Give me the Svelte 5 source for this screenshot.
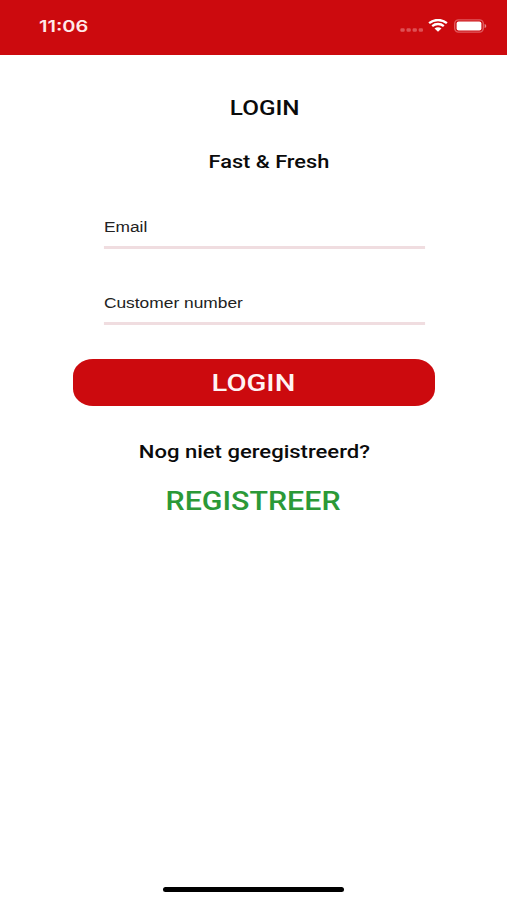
<script>
  let email = $state('');
  let customerNumber = $state('');
</script>

<div class="screen">
  <header class="status-bar">
    <span class="wide time">11:06</span>
    <div class="status-icons">
      <svg class="signal" width="24" height="4" viewBox="0 0 24 4" aria-hidden="true">
        {#each [0, 1, 2, 3] as dot}
          <rect x={0.4 + dot * 6.1} y="0.2" width="4.3" height="3.6" rx="1.2" />
        {/each}
      </svg>
      <svg class="wifi" width="20" height="13" viewBox="0 0 20 13" aria-hidden="true">
        <path d="M1.1 4.2C6.1-.1 13.9-.1 18.9 4.2M4.2 7.1c3.3-2.8 8.3-2.8 11.6 0" />
        <path class="fill" d="M6.5 9.5c2-1.7 5-1.7 7 0L10 12.7z" />
      </svg>
      <svg class="battery" width="33" height="14" viewBox="0 0 33 14" aria-hidden="true">
        <rect class="case" x="0.7" y="0.9" width="28.6" height="12.2" rx="3.8" />
        <rect class="charge" x="2.6" y="2.6" width="24.8" height="8.8" rx="2" />
        <path class="tip" d="M30.6 4.9c2.2.7 2.2 3.5 0 4.2z" />
      </svg>
    </div>
  </header>

  <main>
    <h1><span class="wide">LOGIN</span></h1>
    <h2><span class="wide brand">Fast &amp; Fresh</span></h2>

    <form onsubmit={(event) => event.preventDefault()}>
      <input type="text" placeholder="Email" aria-label="Email" bind:value={email} />
      <input
        type="text"
        placeholder="Customer number"
        aria-label="Customer number"
        bind:value={customerNumber}
      />
      <button class="login" type="submit"><span class="wide">LOGIN</span></button>
    </form>

    <p><span class="wide question">Nog niet geregistreerd?</span></p>
    <button class="register" type="button"><span class="wide">REGISTREER</span></button>
  </main>

  <div class="home-indicator"></div>
</div>

<style>
  :global(body) {
    margin: 0;
    background: #fff;
  }

  .screen {
    display: flex;
    flex-direction: column;
    align-items: center;
    box-sizing: border-box;
    width: 100%;
    height: 100vh;
    padding-bottom: 8px;
    overflow: hidden;
    background: #fff;
    color: #0b0b0b;
    font-family: Roboto, 'Liberation Sans', sans-serif;
  }

  /* Extended lettering */
  .wide {
    display: inline-block;
    white-space: nowrap;
    transform: scaleX(1.215);
  }

  .status-bar {
    display: flex;
    justify-content: space-between;
    box-sizing: border-box;
    width: 100%;
    height: 54.5px;
    padding: 16px 20px 0 39px;
    background: #cc0a0e;
  }

  .time {
    height: 20px;
    color: #ffe9e9;
    font: 600 16px/20px Inter, Roboto, sans-serif;
    transform: scaleX(1.25);
    transform-origin: left;
  }

  .status-icons {
    display: flex;
    align-items: flex-start;
  }

  .signal {
    margin: 12px 4px 0 0;
    fill: #de5054;
  }

  .wifi {
    margin: 3px 6px 0 0;
    fill: none;
    stroke: #fff;
    stroke-width: 2.3;
  }

  .wifi .fill {
    fill: #fff;
    stroke: none;
  }

  .battery {
    margin-top: 3px;
  }

  .case {
    fill: none;
    stroke: #e05a5e;
    stroke-width: 1.4;
  }

  .charge {
    fill: #fff;
  }

  .tip {
    fill: #e6888a;
  }

  main {
    display: flex;
    flex: 1;
    flex-direction: column;
    align-items: center;
    width: 100%;
  }

  h1,
  h2,
  p {
    margin: 0;
    font-weight: 500;
  }

  h1 {
    padding: 41.5px 0 0 22px;
    font-size: 20px;
    line-height: 24px;
  }

  h2 {
    padding: 30px 0 0 31px;
    font-size: 18px;
    line-height: 24px;
  }

  .brand {
    transform: scaleX(1.21);
  }

  form {
    display: flex;
    flex-direction: column;
    align-items: center;
    width: 362px;
    margin-top: 33px;
  }

  input {
    box-sizing: border-box;
    width: 259px;
    height: 41.5px;
    margin: 0 0 34.5px 21px;
    padding: 2px 0 0;
    border: 0;
    border-bottom: 3px solid #f0dde0;
    border-radius: 0;
    outline: 0;
    background: none;
    color: #222;
    font: 14px 'Liberation Sans', Arial, sans-serif;
    transform: scaleX(1.24);
  }

  input::placeholder {
    color: #222;
    opacity: 1;
  }

  button {
    padding: 0;
    border: 0;
    font-family: inherit;
    font-weight: 500;
    cursor: pointer;
  }

  .login {
    width: 362px;
    height: 47px;
    padding-top: 2px;
    border-radius: 20px / 17px;
    background: #cc0a0e;
    color: #fff3f3;
    font-size: 24px;
    line-height: 45px;
  }

  p {
    margin-top: 34px;
    padding-left: 1px;
    font-size: 18px;
    line-height: 24px;
  }

  .question {
    transform: scaleX(1.225);
  }

  .register {
    margin-top: 22.5px;
    background: none;
    color: #2b9937;
    font-size: 25px;
    line-height: 30px;
  }

  .home-indicator {
    width: 181px;
    height: 5px;
    border-radius: 3px;
    background: #000;
  }
</style>
